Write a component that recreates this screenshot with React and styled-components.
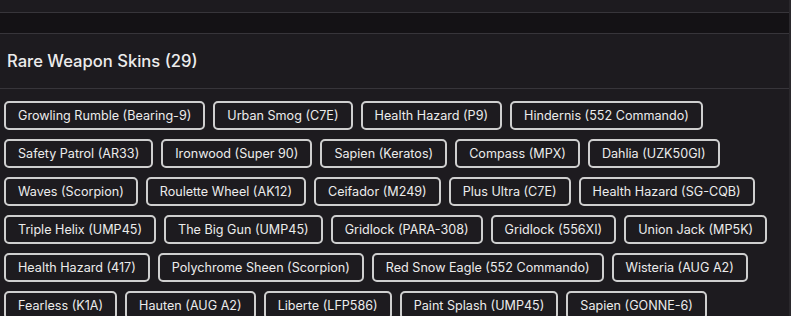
import styled, { createGlobalStyle } from 'styled-components'

const Global = createGlobalStyle`
html, body { margin:0; padding:0; background:#1d1b1f; }
body { font-family: Inter, "Noto Sans", sans-serif; color:#e6e6e6; }
`

const Page = styled.div`
width:100%;
min-height:316px;
background:#1d1b1f;
overflow:hidden;
border-right:2px solid #2a282c;
box-sizing:border-box;
`
const TopBar = styled.div`
height:12px;
border-bottom:1px solid #37353a;
`
const Band = styled.div`
height:20px;
background:#141215;
border-bottom:1px solid #37353a;
`
const Header = styled.div`
height:54px;
display:flex;
align-items:center;
padding:0 7px;
border-bottom:1px solid #37353a;
`
const Title = styled.h2`
margin:0;
font-size:16.6px;
font-weight:500;
color:#ececec;
`
const ChipArea = styled.div`
display:flex;
flex-wrap:wrap;
gap:9px 8px;
padding:12px 4px 0 4px;
`
const Chip = styled.div`
height:29px;
box-sizing:border-box;
padding:0 12px;
display:flex;
align-items:center;
border:2px solid #cfcfcf;
border-radius:5px;
font-size:12.6px;
color:#ececec;
white-space:nowrap;
`

const skins = [
  'Growling Rumble (Bearing-9)', 'Urban Smog (C7E)', 'Health Hazard (P9)', 'Hindernis (552 Commando)',
  'Safety Patrol (AR33)', 'Ironwood (Super 90)', 'Sapien (Keratos)', 'Compass (MPX)', 'Dahlia (UZK50GI)',
  'Waves (Scorpion)', 'Roulette Wheel (AK12)', 'Ceifador (M249)', 'Plus Ultra (C7E)', 'Health Hazard (SG-CQB)',
  'Triple Helix (UMP45)', 'The Big Gun (UMP45)', 'Gridlock (PARA-308)', 'Gridlock (556XI)', 'Union Jack (MP5K)',
  'Health Hazard (417)', 'Polychrome Sheen (Scorpion)', 'Red Snow Eagle (552 Commando)', 'Wisteria (AUG A2)',
  'Fearless (K1A)', 'Hauten (AUG A2)', 'Liberte (LFP586)', 'Paint Splash (UMP45)', 'Sapien (GONNE-6)',
]

function App() {
  return (<Page>
    <Global />
    <TopBar />
    <Band />
    <Header><Title>Rare Weapon Skins (29)</Title></Header>
    <ChipArea>{skins.map((s, i) => <Chip key={i}>{s}</Chip>)}</ChipArea>
  </Page>)
}

export default App
